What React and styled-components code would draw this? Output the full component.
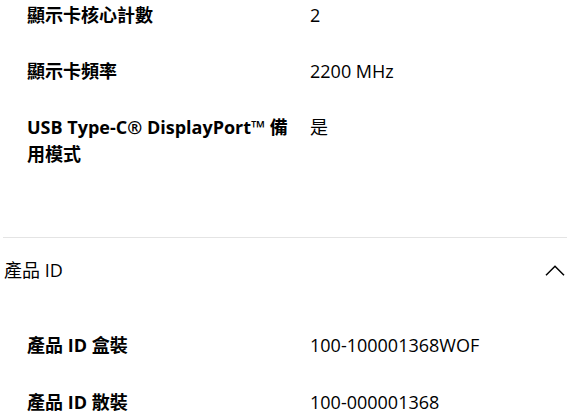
import React from 'react'
import styled, { createGlobalStyle } from 'styled-components'

const GlobalStyle = createGlobalStyle`
    body {
        margin: 0;
        background: #fff;
        font-family: 'Open Sans', 'Noto Sans CJK TC', sans-serif;
        font-size: 18px;
        color: #000;
    }
`

const graphicsSpecs = [
    { label: '顯示卡核心計數', value: '2' },
    { label: '顯示卡頻率', value: '2200 MHz' },
    { label: 'USB Type-C® DisplayPort™ 備用模式', value: '是' },
]

const productIds = [
    { label: '產品 ID 盒裝', value: '100-100001368WOF' },
    { label: '產品 ID 散裝', value: '100-000001368' },
]

export default function App() {
    return (
        <Wrapper>
            <GlobalStyle />
            <Section padBottom='40px'>
                <SpecList>
                    {graphicsSpecs.map((s) => (
                        <SpecRow key={s.label} gap='29px'>
                            <Label>{s.label}</Label>
                            <Value>{s.value}</Value>
                        </SpecRow>
                    ))}
                </SpecList>
            </Section>
            <Section bordered>
                <Header>
                    <HeaderTitle>產品 ID</HeaderTitle>
                    <Chevron viewBox='0 0 20 11' aria-hidden='true'>
                        <polyline points='1,10.2 10,1.2 19,10.2' />
                    </Chevron>
                </Header>
                <SpecList>
                    {productIds.map((s) => (
                        <SpecRow key={s.label} gap='30px'>
                            <Label>{s.label}</Label>
                            <Value>{s.value}</Value>
                        </SpecRow>
                    ))}
                </SpecList>
            </Section>
        </Wrapper>
    )
}

const Wrapper = styled.main`
    width: 100%;
    padding: 2px 3px 0 3px;
    box-sizing: border-box;
`
const Section = styled.section`
    border-top: ${(p) => (p.bordered ? '1px solid #e4e4e4' : 'none')};
    padding-bottom: ${(p) => p.padBottom || '0'};
`
const SpecList = styled.div`
    display: flex;
    flex-direction: column;
    padding-left: 24px;
`
const SpecRow = styled.div`
    display: grid;
    grid-template-columns: 263px 1fr;
    column-gap: 20px;
    line-height: 27px;
    margin-bottom: ${(p) => p.gap};
`
const Label = styled.div`
    font-weight: 700;
`
const Value = styled.div`
    font-weight: 400;
`
const Header = styled.div`
    display: flex;
    align-items: center;
    justify-content: space-between;
    padding: 19px 2px 48px 1px;
    line-height: 27px;
`
const HeaderTitle = styled.h3`
    margin: 0;
    font-size: 18px;
    font-weight: 400;
`
const Chevron = styled.svg`
    width: 20px;
    height: 11px;
    fill: none;
    stroke: #000;
    stroke-width: 1.5;
`
